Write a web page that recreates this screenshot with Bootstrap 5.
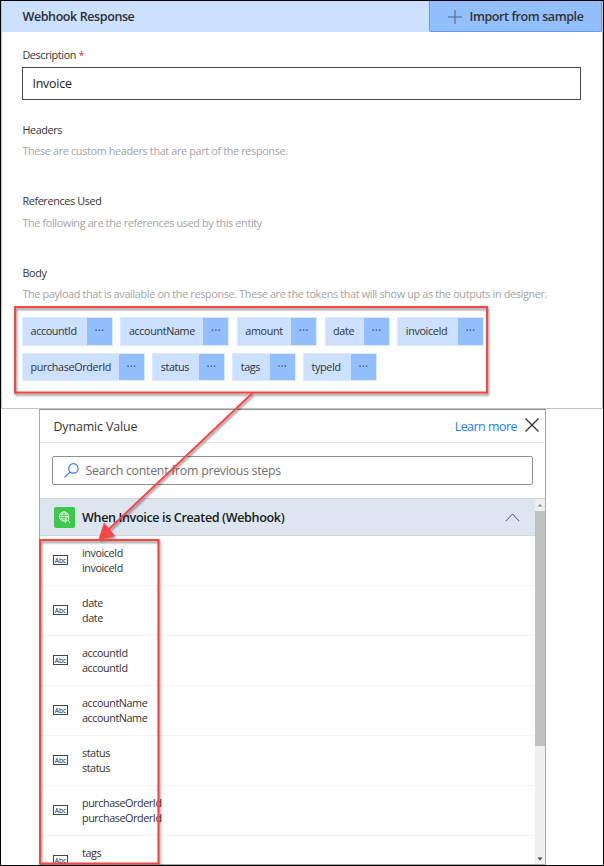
<!DOCTYPE html>
<html lang="en">
<head>
<meta charset="utf-8">
<title>Webhook Response</title>
<link rel="stylesheet" href="https://cdn.jsdelivr.net/npm/bootstrap@5.3.0/dist/css/bootstrap.min.css">
<style>
body{font-family:"Open Sans","Noto Sans",sans-serif;font-size:10.8px;letter-spacing:-.37px;line-height:16px;color:#333;background:#fff}
.frame{width:604px;height:866px;border:1px solid #000}
.panel-top{height:408px;border:1px solid #c4c4c4;border-top:0}
.bar{height:31px;background:#cce0ff;font-size:12.5px;letter-spacing:-.4px;font-weight:600;padding-left:20.5px;color:#2b2f36}
.bar .title{padding-top:1px}
.import{width:173px;background:#94bfff;border:1px solid #5a9bf8;border-top:0;border-radius:0 0 2px 2px;font-size:12.5px;letter-spacing:-.4px;font-weight:600;color:#333;padding:2px 0 0}
.sec{padding:15px 21px 0 20.400px}
.fld{height:32.500px;border:1px solid #484848;border-radius:0;padding:2px 9px 0;font-size:12.4px;letter-spacing:-.2px;color:#222;background:#fff;margin:4px 0 22.500px}
.lbl{letter-spacing:-.36px}
.hint{color:#a3a3a3;letter-spacing:-.33px;margin:5.300px 0 34.100px;white-space:nowrap}
.hint.last{margin-bottom:0}
.tokens{margin-top:15.200px;row-gap:7.300px;column-gap:7.4px;margin-left:-.4px}
.token{height:28.4px;background:#cce0ff;border:1px solid #dceaff;white-space:nowrap}
.token .nm{flex:1;padding-left:7.500px}
.token .more{width:25px;background:#94bfff;font-size:12px;letter-spacing:.1px;color:#39506f}
.w1{width:91px}.w2{width:109px}.w3{width:80.4px}.w4{width:65.4px}.w5{width:86.5px}
.w6{width:122.8px}.w7{width:72.6px}.w8{width:63.4px}.w9{width:74px}
.dyn{width:507px;height:456px;margin-left:38px;border:1px solid #a9a9a9;border-top-color:#8f8f8f;background:#fff}
.dyn-head{height:33px;border-bottom:1px solid #e8e8e8;padding:2px 6px 0 13.500px;font-size:12.4px;letter-spacing:-.12px}
.learn{color:#2479f5;text-decoration:none;letter-spacing:-.48px}
.find{height:29px;margin:13px 12px 13px;border:1px solid #919191;border-radius:2px;padding-left:11px;font-size:12.4px;letter-spacing:-.29px;color:#707070}
.find svg{margin-right:6.500px}
.list{height:366px;overflow:hidden;border-top:1px solid #d0d0d0}
.grp{height:37px;background:#dde6f0;border-bottom:1px solid #d3d8de;padding:0 15px 0 14px;font-size:12.6px;letter-spacing:-.38px;font-weight:600;color:#1b1b1b}
.grp span{padding-top:1px}
.grp svg:first-child{margin-right:7px}
.rowitem{height:50px;border-bottom:1px solid #f3f3f3;padding-left:13px;line-height:14.2px;letter-spacing:-.44px;color:#333}
.rowitem svg{margin-right:14px}
.track{width:10.5px;background:#f0f0f0;font-size:0}
.thumb{height:235px;background:#c1c1c1}
.marks{left:0;top:0;filter:drop-shadow(1px 2px 1px rgba(0,0,0,.45));pointer-events:none}
</style>
<script src="https://cdn.jsdelivr.net/npm/bootstrap@5.3.0/dist/js/bootstrap.bundle.min.js"></script>
</head>
<body>
<svg width="0" height="0" class="d-block"><defs><g id="abc"><rect x=".5" y=".5" width="14" height="9" fill="#fff" stroke="#444" stroke-width="1"/><text x="7.5" y="7.5" text-anchor="middle" font-family="Open Sans" font-weight="400" font-size="6.8" letter-spacing="0" fill="#222">Abc</text></g></defs></svg>
<main class="frame position-relative overflow-hidden">
  <section class="panel-top">
    <div class="bar d-flex align-items-stretch justify-content-between">
      <span class="title align-self-center">Webhook Response</span>
      <button class="import d-flex align-items-center justify-content-center"><svg class="me-2" width="14" height="14" viewBox="0 0 14 14"><path d="M7 0v14M0 7h14" stroke="#51606f" stroke-width="1"/></svg>Import from sample</button>
    </div>
    <div class="sec">
      <div class="lbl">Description <span class="text-danger">*</span></div>
      <div class="fld d-flex align-items-center">Invoice</div>
      <div class="lbl">Headers</div>
      <div class="hint">These are custom headers that are part of the response.</div>
      <div class="lbl">References Used</div>
      <div class="hint">The following are the references used by this entity</div>
      <div class="lbl">Body</div>
      <div class="hint last">The payload that is available on the response. These are the tokens that will show up as the outputs in designer.</div>
      <div class="tokens d-flex flex-wrap">
        <div class="token w1 d-flex align-items-stretch"><span class="nm align-self-center">accountId</span><span class="more d-flex align-items-center justify-content-center">···</span></div>
        <div class="token w2 d-flex align-items-stretch"><span class="nm align-self-center">accountName</span><span class="more d-flex align-items-center justify-content-center">···</span></div>
        <div class="token w3 d-flex align-items-stretch"><span class="nm align-self-center">amount</span><span class="more d-flex align-items-center justify-content-center">···</span></div>
        <div class="token w4 d-flex align-items-stretch"><span class="nm align-self-center">date</span><span class="more d-flex align-items-center justify-content-center">···</span></div>
        <div class="token w5 d-flex align-items-stretch"><span class="nm align-self-center">invoiceId</span><span class="more d-flex align-items-center justify-content-center">···</span></div>
        <div class="token w6 d-flex align-items-stretch"><span class="nm align-self-center">purchaseOrderId</span><span class="more d-flex align-items-center justify-content-center">···</span></div>
        <div class="token w7 d-flex align-items-stretch"><span class="nm align-self-center">status</span><span class="more d-flex align-items-center justify-content-center">···</span></div>
        <div class="token w8 d-flex align-items-stretch"><span class="nm align-self-center">tags</span><span class="more d-flex align-items-center justify-content-center">···</span></div>
        <div class="token w9 d-flex align-items-stretch"><span class="nm align-self-center">typeId</span><span class="more d-flex align-items-center justify-content-center">···</span></div>
      </div>
    </div>
  </section>
  <section class="dyn">
    <div class="dyn-head d-flex align-items-center">
      <span class="me-auto">Dynamic Value</span><a class="learn" href="#">Learn more</a>
      <svg class="ms-2 mb-1" width="14" height="14" viewBox="0 0 14 14"><path d="M.5.5l13 13M13.500.5l-13 13" stroke="#333" stroke-width="1.3"/></svg>
    </div>
    <div class="find d-flex align-items-center"><svg width="15" height="15" viewBox="0 0 15 15" fill="none" stroke="#2f7df6" stroke-width="1.2"><circle cx="9.4" cy="5.4" r="4.7"/><path d="M6 8.800L.4 14.400"/></svg>Search content from previous steps</div>
    <div class="list d-flex">
      <div class="flex-grow-1">
        <div class="grp d-flex align-items-center">
          <svg width="21" height="21" viewBox="0 0 21 21" fill="none" stroke="#e9fbea" stroke-width=".8"><rect width="21" height="21" rx="2" fill="#3dc94c" stroke="none"/><circle cx="10" cy="9.500" r="4.700"/><ellipse cx="10" cy="9.500" rx="2.100" ry="4.700"/><path d="M5.300 9.500h9.400M6 7.200h8M6 11.800h6"/><circle cx="13.400" cy="12" r="1.500" fill="#3dc94c"/><path d="M11.200 16l1.500-2.600M15.800 16l-1.500-2.600"/></svg>
          <span class="me-auto">When Invoice is Created (Webhook)</span>
          <svg width="15" height="9" viewBox="0 0 15 9"><path d="M.7 8.200L7.500 1l6.800 7.200" fill="none" stroke="#4b5563" stroke-width="1"/></svg>
        </div>
        <div class="rowitem d-flex align-items-center"><svg width="15" height="11"><use href="#abc"/></svg><div>invoiceId<br>invoiceId</div></div>
        <div class="rowitem d-flex align-items-center"><svg width="15" height="11"><use href="#abc"/></svg><div>date<br>date</div></div>
        <div class="rowitem d-flex align-items-center"><svg width="15" height="11"><use href="#abc"/></svg><div>accountId<br>accountId</div></div>
        <div class="rowitem d-flex align-items-center"><svg width="15" height="11"><use href="#abc"/></svg><div>accountName<br>accountName</div></div>
        <div class="rowitem d-flex align-items-center"><svg width="15" height="11"><use href="#abc"/></svg><div>status<br>status</div></div>
        <div class="rowitem d-flex align-items-center"><svg width="15" height="11"><use href="#abc"/></svg><div>purchaseOrderId<br>purchaseOrderId</div></div>
        <div class="rowitem d-flex align-items-center"><svg width="15" height="11"><use href="#abc"/></svg><div>tags<br>&nbsp;</div></div>
      </div>
      <div class="track d-flex flex-column">
        <svg width="10" height="12"><path d="M2.500 7.500L5 5l2.500 2.500z" fill="#888"/></svg>
        <div class="thumb"></div>
        <svg class="mt-auto" width="10" height="12"><path d="M2.500 5.500h5L5 8.500z" fill="#444"/></svg>
      </div>
    </div>
  </section>
  <svg class="marks position-absolute" width="602" height="864" viewBox="1 1 602 864" fill="none" stroke="#fb4545" stroke-width="2">
    <rect x="15" y="307" width="472" height="85.500"/>
    <rect x="40" y="540" width="118.500" height="323.500"/>
    <path d="M252.500 393L108 530"/>
    <path d="M98.500 539.500L104 522.500L115 536z" fill="#fb4545" stroke="none"/>
  </svg>
</main>
</body>
</html>
